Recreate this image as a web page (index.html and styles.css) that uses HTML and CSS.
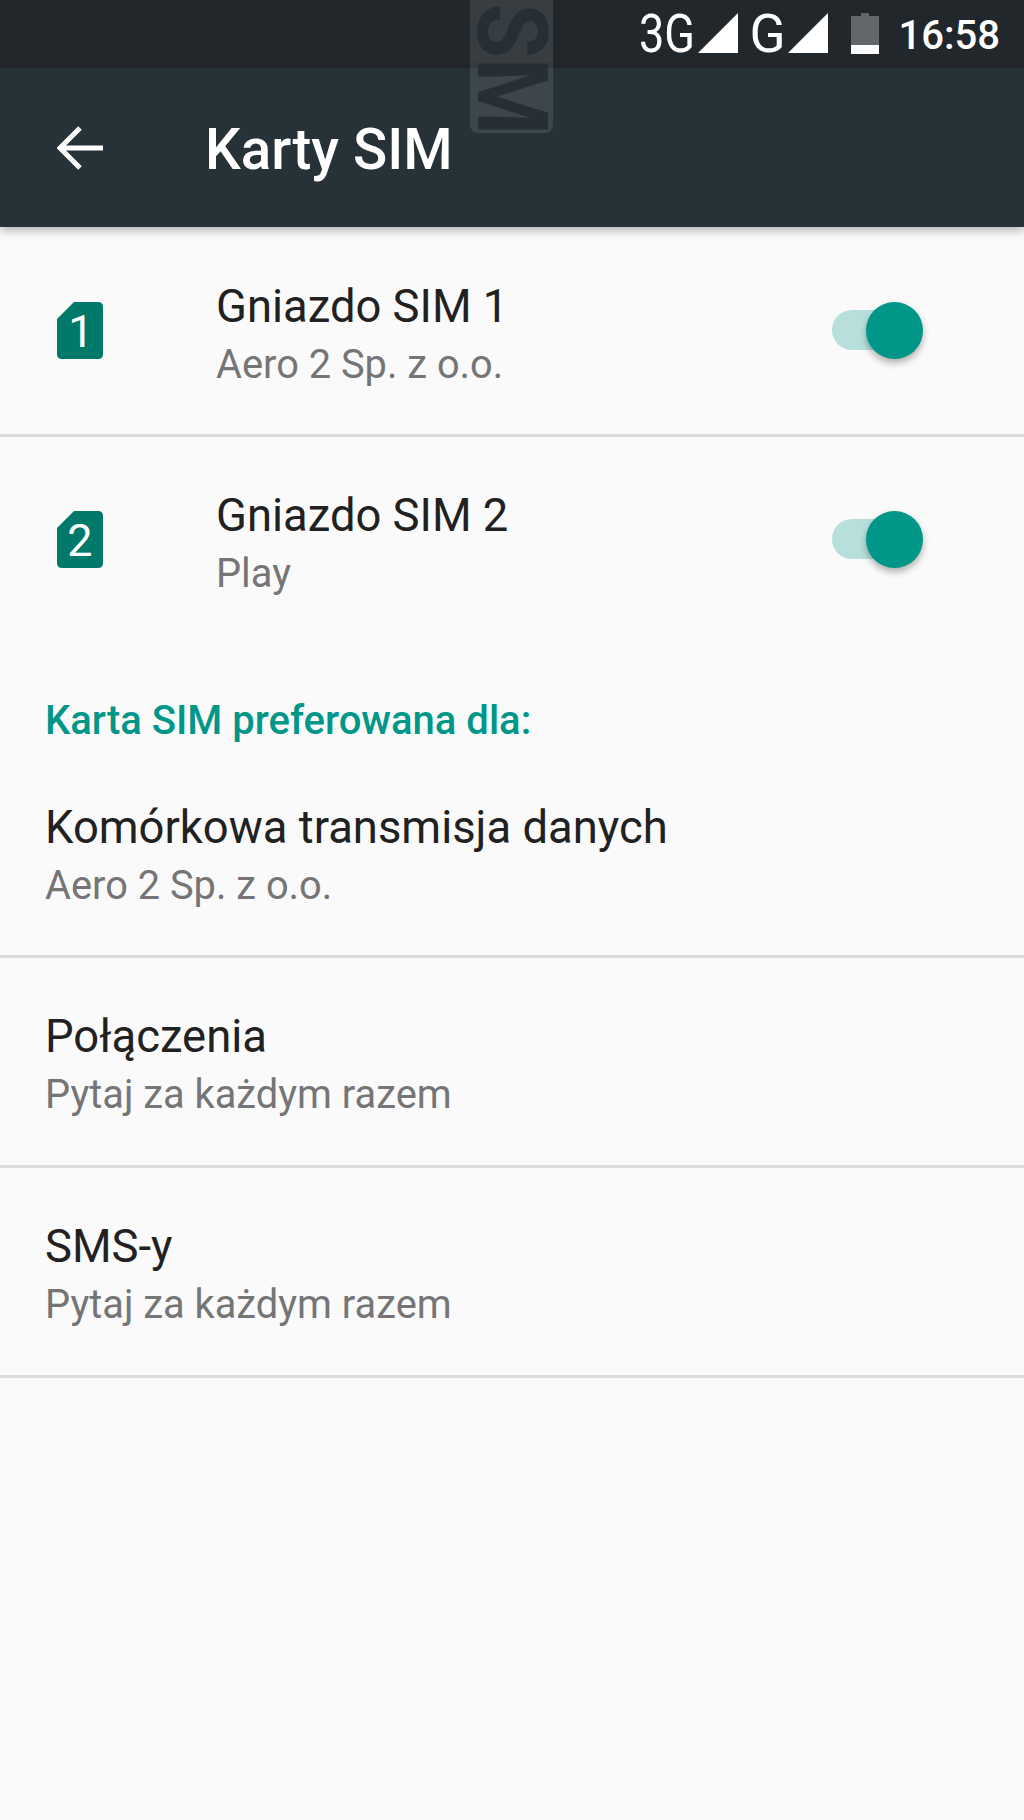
FILE: index.html
```html
<!DOCTYPE html>
<html lang="pl">
<head>
  <meta charset="UTF-8">
  <meta name="viewport" content="width=device-width, initial-scale=1.0">
  <title>Karty SIM</title>
  <link rel="stylesheet" href="styles.css">
</head>
<body>
  <div class="phone">
    <div class="statusbar">
      <span class="net net-3g">3G</span>
      <svg class="signal" viewBox="0 0 40 40"><path d="M0 40 40 0V40Z"/></svg>
      <span class="net net-g">G</span>
      <svg class="signal" viewBox="0 0 40 40"><path d="M0 40 40 0V40Z"/></svg>
      <svg class="battery" viewBox="0 0 28 41">
        <path class="battery-empty" d="M10 0H18V3H28V32H0V3H10Z"/>
        <rect class="battery-level" y="32" width="28" height="9"/>
      </svg>
      <span class="clock">16:58</span>
    </div>

    <header class="appbar">
      <svg class="back" viewBox="0 0 46 46">
        <path d="M46 23H3M23 3 3 23 23 43"/>
      </svg>
      <h1>Karty SIM</h1>
    </header>

    <div class="watermark"><span>SM</span></div>

    <section class="sim-row row-one divided">
      <svg class="sim" viewBox="0 0 46 57">
        <path d="M17 0H41Q46 0 46 5V52Q46 57 41 57H5Q0 57 0 52V17Z"/>
        <text x="24" y="45">1</text>
      </svg>
      <div class="labels">
        <div class="primary">Gniazdo SIM 1</div>
        <div class="secondary">Aero 2 Sp. z o.o.</div>
      </div>
      <div class="switch"><div class="thumb"></div></div>
    </section>

    <section class="sim-row row-two">
      <svg class="sim" viewBox="0 0 46 57">
        <path d="M17 0H41Q46 0 46 5V52Q46 57 41 57H5Q0 57 0 52V17Z"/>
        <text x="23" y="45">2</text>
      </svg>
      <div class="labels">
        <div class="primary">Gniazdo SIM 2</div>
        <div class="secondary">Play</div>
      </div>
      <div class="switch"><div class="thumb"></div></div>
    </section>

    <h2 class="section-title">Karta SIM preferowana dla:</h2>

    <section class="pref-row first divided">
      <div class="primary">Komórkowa transmisja danych</div>
      <div class="secondary">Aero 2 Sp. z o.o.</div>
    </section>
    <section class="pref-row divided">
      <div class="primary">Połączenia</div>
      <div class="secondary">Pytaj za każdym razem</div>
    </section>
    <section class="pref-row divided">
      <div class="primary">SMS-y</div>
      <div class="secondary">Pytaj za każdym razem</div>
    </section>
  </div>
</body>
</html>
```

FILE: styles.css
```css
body {
  margin: 0;
  background-color: #fafafa;
  font-family: Roboto, "Liberation Sans", sans-serif;
}
.phone {
  position: relative;
  width: 1024px;
  height: 1820px;
  overflow: hidden;
  background-color: #fafafa;
}

/* status bar */
.statusbar {
  height: 68px;
  box-sizing: border-box;
  background-color: #21272b;
  color: white;
  display: flex;
  align-items: center;
  justify-content: flex-end;
  padding-right: 24px;
}
.net {
  font-size: 53px;
  font-weight: 400;
  line-height: 68px;
  display: inline-block;
  transform-origin: left center;
}
.net-3g {
  width: 59px;
  transform: scaleX(0.85);
}
.net-g {
  width: 38px;
  margin-left: 12px;
}
.signal {
  width: 40px;
  height: 40px;
  margin-bottom: 2px;
  fill: white;
}
.battery {
  width: 28px;
  height: 41px;
  margin-left: 23px;
  margin-right: 20px;
  margin-bottom: 2px;
}
.battery-empty {
  fill: #63676a;
}
.battery-level {
  fill: white;
}
.clock {
  font-size: 40px;
  font-weight: 500;
  margin-top: 2px;
}

/* app bar */
.appbar {
  height: 159px;
  box-sizing: border-box;
  background-color: #263238;
  display: flex;
  align-items: center;
  padding-left: 57px;
  box-shadow: 0 3px 9px rgba(0, 0, 0, 0.3);
  position: relative;
}
.back {
  width: 46px;
  height: 46px;
  fill: none;
  stroke: white;
  stroke-width: 5;
}
.appbar h1 {
  margin: 4px 0 0 102px;
  color: white;
  font-size: 56.5px;
  font-weight: 500;
}

.watermark {
  position: absolute;
  left: 470px;
  top: 0;
  width: 83px;
  height: 133px;
  overflow: hidden;
  background-color: rgba(255, 255, 255, 0.1);
  border-radius: 0 0 8px 8px;
  display: flex;
  flex-direction: column;
  justify-content: flex-end;
  align-items: center;
}
.watermark span {
  writing-mode: vertical-rl;
  font-weight: 700;
  font-size: 98px;
  line-height: 83px;
  color: #252f35;
  transform: scaleY(0.9);
  transform-origin: center bottom;
  margin-bottom: -2px;
}

/* rows */
.divided {
  border-bottom: 3px solid #dcdcdc;
}
.sim-row {
  box-sizing: border-box;
  display: flex;
  align-items: center;
  padding-left: 57px;
}
.row-one {
  height: 210px;
}
.row-two {
  height: 206px;
}
.sim {
  width: 46px;
  height: 57px;
  margin-top: -1px;
  fill: #00796b;
  flex-shrink: 0;
}
.sim text {
  fill: white;
  font-size: 45px;
  text-anchor: middle;
}
.labels {
  margin-left: 113px;
  padding-top: 10px;
  flex: 1;
}
.row-two .labels {
  padding-top: 8px;
}
.primary {
  color: #212121;
  font-size: 45.4px;
  line-height: 59px;
}
.secondary {
  color: #757575;
  font-size: 39.8px;
  line-height: 58px;
}
.switch {
  position: relative;
  width: 77px;
  height: 40px;
  margin-top: -2px;
  margin-right: 115px;
  border-radius: 20px;
  background-color: #b7e0dc;
}
.thumb {
  position: absolute;
  right: -14px;
  top: -8px;
  width: 57px;
  height: 57px;
  border-radius: 50%;
  background-color: #009688;
  box-shadow: 0 4px 7px rgba(0, 0, 0, 0.3);
}
.section-title {
  margin: 0;
  padding: 50px 0 0 45px;
  height: 69px;
  color: #009688;
  font-size: 40px;
  font-weight: 500;
  line-height: 56px;
}
.pref-row {
  height: 210px;
  box-sizing: border-box;
  padding: 49px 0 0 45px;
}
.pref-row.first {
  height: 196px;
  padding-top: 36px;
}
```
